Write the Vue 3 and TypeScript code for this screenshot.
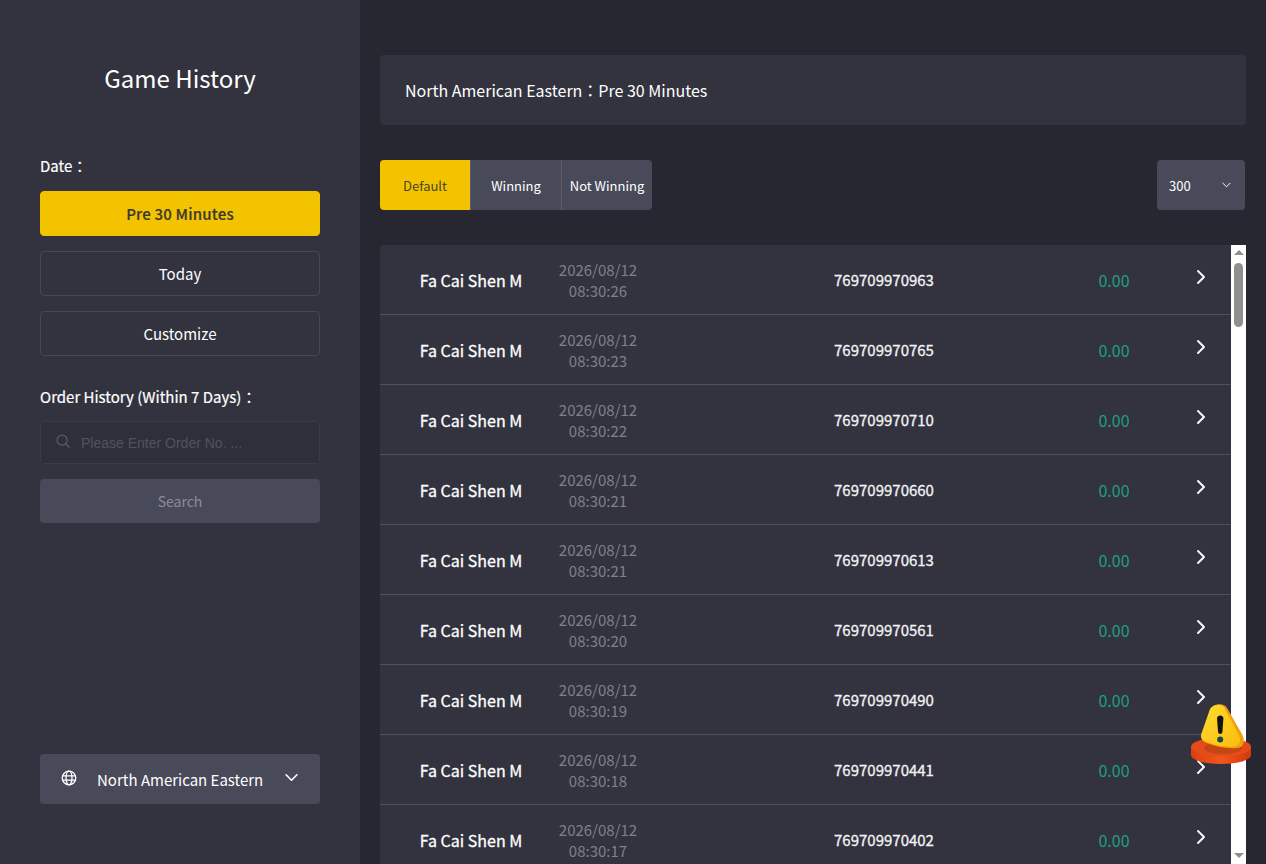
<template>
  <div class="page">
    <aside class="sidebar">
      <h1 class="title">Game History</h1>
      <p class="label date-label">Date：</p>
      <div class="date-buttons">
        <button
          v-for="item in dateOptions"
          :key="item"
          class="date-btn"
          :class="{ active: item === activeDate }"
          @click="activeDate = item"
        >{{ item }}</button>
      </div>
      <p class="label order-label">Order History (Within 7 Days)：</p>
      <div class="search-box">
        <svg class="search-icon" viewBox="0 0 16 16" fill="none" stroke="currentColor" stroke-width="1.2">
          <circle cx="7" cy="7" r="5.8" />
          <path d="M11.200 11.200l3.800 3.800" stroke-linecap="round" />
        </svg>
        <input v-model="orderNo" class="search-input" type="text" placeholder="Please Enter Order No. ..." />
      </div>
      <button class="search-btn">Search</button>
      <div class="zone">
        <svg class="globe" viewBox="0 0 16 16" fill="none" stroke="currentColor" stroke-width="1.3">
          <circle cx="8" cy="8" r="6.8" />
          <ellipse cx="8" cy="8" rx="3" ry="6.8" />
          <path d="M1.600 5.800h12.800M1.600 10.200h12.800" />
        </svg>
        <span class="zone-name">North American Eastern</span>
        <svg class="zone-caret" viewBox="0 0 12 8" fill="none" stroke="currentColor" stroke-width="1.5">
          <path d="M1 1.500l5 5 5-5" stroke-linecap="round" stroke-linejoin="round" />
        </svg>
      </div>
    </aside>

    <main class="main">
      <div class="banner">North American Eastern：Pre 30 Minutes</div>

      <div class="toolbar">
        <div class="tabs">
          <button
            v-for="tab in tabs"
            :key="tab"
            class="tab"
            :class="{ active: tab === activeTab }"
            @click="activeTab = tab"
          >{{ tab }}</button>
        </div>
        <div class="page-size">
          <span>300</span>
          <svg class="size-caret" viewBox="0 0 10 6" fill="none" stroke="currentColor" stroke-width="1.1">
            <path d="M1 1l4 4 4-4" stroke-linecap="round" stroke-linejoin="round" />
          </svg>
        </div>
      </div>

      <div class="list-wrap">
        <div class="list">
          <div v-for="row in rows" :key="row.order" class="row">
            <div class="game">Fa Cai Shen M</div>
            <div class="time">2026/08/12<br />{{ row.time }}</div>
            <div class="order">{{ row.order }}</div>
            <div class="amount">0.00</div>
            <svg class="row-arrow" viewBox="0 0 10 16" fill="none" stroke="currentColor" stroke-width="1.9">
              <path d="M2 2l6 6-6 6" stroke-linecap="round" stroke-linejoin="round" />
            </svg>
          </div>
        </div>
        <div class="scrollbar">
          <span class="scroll-up"></span>
          <span class="scroll-thumb"></span>
          <span class="scroll-down"></span>
        </div>
      </div>

      <svg class="alert" viewBox="0 0 62 62">
        <defs>
          <linearGradient id="discSide" x1="0" x2="1" y1="0" y2="0">
            <stop offset="0" stop-color="#d8400f" />
            <stop offset="0.5" stop-color="#f4571c" />
            <stop offset="1" stop-color="#d0390e" />
          </linearGradient>
          <linearGradient id="signFace" x1="0" x2="1" y1="0" y2="1">
            <stop offset="0" stop-color="#ffdb30" />
            <stop offset="1" stop-color="#fbbd10" />
          </linearGradient>
        </defs>
        <path d="M1 44v8c0 5 13.400 9 30 9s30-4 30-9v-8z" fill="url(#discSide)" />
        <ellipse cx="31" cy="44" rx="30" ry="9.500" fill="#e64c1a" />
        <ellipse cx="33" cy="45" rx="19" ry="6" fill="#a9400e" opacity="0.55" />
        <path d="M21 6c3-5.500 13-6.500 16-1l15.500 27c3 6 1 12-5 13-11 1-24-2-33-6-3-2-4-5-2-9z" fill="#f0a00c" />
        <path d="M20 6c3-5 11.500-6 14.500-1l14.500 27c2.500 6 0.500 10.500-5 11.500-10 1-21-1.500-30-5.500-3-2-4-5-2-9z" fill="url(#signFace)" />
        <path d="M27 15.500c0-4 6.400-4 6.400 0l-1 13.500c-0.200 2.500-4 2.500-4.300 0z" fill="#14140f" />
        <circle cx="30.200" cy="36.500" r="3" fill="#0f4a43" />
      </svg>
    </main>
  </div>
</template>

<script setup lang="ts">
import { ref } from 'vue'

interface HistoryRow {
  time: string
  order: string
}

const dateOptions = ['Pre 30 Minutes', 'Today', 'Customize']
const tabs = ['Default', 'Winning', 'Not Winning']

const activeDate = ref('Pre 30 Minutes')
const activeTab = ref('Default')
const orderNo = ref('')

const rows: HistoryRow[] = [
  { time: '08:30:26', order: '769709970963' },
  { time: '08:30:23', order: '769709970765' },
  { time: '08:30:22', order: '769709970710' },
  { time: '08:30:21', order: '769709970660' },
  { time: '08:30:21', order: '769709970613' },
  { time: '08:30:20', order: '769709970561' },
  { time: '08:30:19', order: '769709970490' },
  { time: '08:30:18', order: '769709970441' },
  { time: '08:30:17', order: '769709970402' },
]
</script>

<style>
html,
body {
  margin: 0;
  height: 100%;
  overflow: hidden;
  background: #252630;
}
</style>

<style scoped>
.page {
  display: flex;
  height: 100vh;
  overflow: hidden;
  color: #fff;
  font-family: "Noto Sans CJK TC", "Noto Sans", sans-serif;
  font-size: 15px;
}

.sidebar {
  display: flex;
  flex-direction: column;
  flex: 0 0 360px;
  box-sizing: border-box;
  padding: 0 40px 60px;
  background: #32333f;
}

.title {
  margin: 60px 0 0;
  font-size: 24px;
  line-height: 36px;
  font-weight: 400;
  text-align: center;
}

.label {
  margin: 0;
  font-size: 15px;
  line-height: 22px;
  -webkit-text-stroke: 0.2px;
}

.date-label {
  margin-top: 59px;
}

.date-buttons {
  display: flex;
  flex-direction: column;
  gap: 15px;
  margin-top: 14px;
}

button {
  font-family: inherit;
  cursor: pointer;
}

.date-btn {
  height: 45px;
  padding: 0;
  border: 1px solid #464654;
  border-radius: 4px;
  background: transparent;
  color: #fff;
  font-size: 15px;
}

.date-btn.active {
  border-color: #f4c300;
  background: #f4c300;
  color: #3a3a30;
  font-weight: 500;
  letter-spacing: 0.2px;
  -webkit-text-stroke: 0.2px;
}

.order-label {
  margin-top: 30px;
}

.search-box {
  display: flex;
  align-items: center;
  box-sizing: border-box;
  height: 43px;
  margin-top: 13px;
  padding: 0 15px;
  border: 1px solid #3b3b48;
  border-radius: 4px;
  background: #2f2f3c;
}

.search-icon {
  flex: none;
  width: 14px;
  height: 14px;
  margin-top: -4px;
  color: #636370;
}

.search-input {
  flex: 1;
  min-width: 0;
  margin-left: 11px;
  padding: 0;
  border: none;
  outline: none;
  background: transparent;
  color: #fff;
  font-family: "Liberation Sans", Arial, sans-serif;
  font-size: 14px;
}

.search-input::placeholder {
  color: #52525e;
  opacity: 1;
}

.search-btn {
  height: 44px;
  margin-top: 15px;
  padding: 0;
  border: none;
  border-radius: 4px;
  background: #484a59;
  color: #8c8d98;
  font-size: 14px;
}

.zone {
  display: flex;
  align-items: center;
  height: 50px;
  margin-top: auto;
  padding: 0 22px 0 21px;
  border-radius: 4px;
  background: #484a59;
}

.globe {
  flex: none;
  width: 16px;
  height: 16px;
  margin-top: -3px;
}

.zone-name {
  margin-left: 20px;
  font-size: 15px;
  white-space: nowrap;
}

.zone-caret {
  flex: none;
  width: 13px;
  height: 9px;
  margin-left: auto;
  margin-top: -3px;
}

.main {
  position: relative;
  flex: 1;
  min-width: 0;
  padding: 55px 20px 0;
  background: #262731;
}

.banner {
  box-sizing: border-box;
  height: 70px;
  padding-left: 25px;
  border-radius: 4px;
  background: #32333e;
  font-size: 16px;
  line-height: 70px;
}

.toolbar {
  display: flex;
  justify-content: space-between;
  margin-top: 35px;
  padding-right: 1px;
}

.tabs {
  display: flex;
  height: 50px;
  border-radius: 4px;
  overflow: hidden;
}

.tab {
  width: 91px;
  padding: 0;
  border: none;
  border-left: 1px solid #5d5f6d;
  background: #484a59;
  color: #fff;
  font-size: 13px;
  white-space: nowrap;
}

.tab:first-child {
  width: 90px;
  border-left: none;
}

.tab.active {
  background: #f4c300;
  color: #4a4526;
}

.page-size {
  display: flex;
  align-items: center;
  justify-content: space-between;
  box-sizing: border-box;
  width: 88px;
  height: 50px;
  padding: 0 14px 0 12px;
  border-radius: 4px;
  background: #484a59;
  font-size: 13px;
}

.size-caret {
  width: 9px;
  height: 6px;
  margin-top: -1px;
}

.list-wrap {
  display: flex;
  margin-top: 35px;
}

.list {
  flex: 1;
  min-width: 0;
  border-radius: 4px 0 0 0;
  overflow: hidden;
}

.row {
  display: flex;
  align-items: center;
  box-sizing: border-box;
  height: 70px;
  padding-left: 10px;
  border-bottom: 1px solid #51515e;
  background: #32333e;
}

.game {
  flex: 0 0 162px;
  font-size: 16px;
  font-weight: 400;
  text-align: center;
  color: #fff;
  -webkit-text-stroke: 0.3px;
}

.time {
  flex: 0 0 92px;
  color: #7f808b;
  font-size: 15px;
  line-height: 21px;
  text-align: center;
  padding-top: 1px;
}

.order {
  flex: 0 0 240px;
  margin-left: 120px;
  font-size: 15px;
  font-weight: 400;
  text-align: center;
  color: #f2f2f5;
  -webkit-text-stroke: 0.3px;
}

.amount {
  flex: 0 0 120px;
  margin-left: 50px;
  color: #1f9f7e;
  font-size: 16px;
  text-align: center;
}

.row-arrow {
  flex: none;
  width: 10px;
  height: 16px;
  margin: -5px 0 0 22px;
}

.scrollbar {
  position: relative;
  display: flex;
  flex-direction: column;
  align-items: center;
  flex: 0 0 15px;
  height: 619px;
  background: #fff;
}

.scroll-up {
  width: 0;
  height: 0;
  margin-top: 5px;
  border: 5px solid transparent;
  border-top: none;
  border-bottom-color: #8f8f8f;
}

.scroll-thumb {
  width: 9px;
  height: 64px;
  margin-top: 8px;
  border-radius: 5px;
  background: #8f8f8f;
}

.scroll-down {
  position: absolute;
  bottom: 6px;
  width: 0;
  height: 0;
  border: 5px solid transparent;
  border-bottom: none;
  border-top-color: #8f8f8f;
}

.alert {
  position: absolute;
  left: 830px;
  top: 703px;
  width: 62px;
  height: 62px;
}
</style>
